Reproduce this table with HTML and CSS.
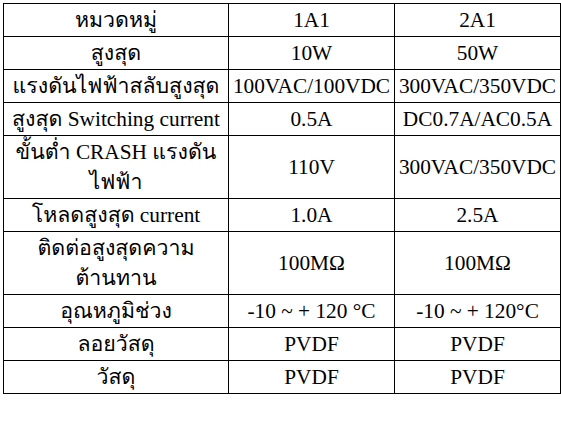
FILE: index.html
```html
<!DOCTYPE html>
<html lang="th">
<head>
<meta charset="utf-8">
<title>Spec table</title>
<link rel="stylesheet" href="styles.css">
</head>
<body>
<table class="spec">
  <colgroup>
    <col class="c1">
    <col class="c2">
    <col class="c3">
  </colgroup>
  <tbody>
    <tr><td>หมวดหมู่</td><td>1A1</td><td>2A1</td></tr>
    <tr><td>สูงสุด</td><td>10W</td><td>50W</td></tr>
    <tr><td>แรงดันไฟฟ้าสลับสูงสุด</td><td>100VAC/100VDC</td><td>300VAC/350VDC</td></tr>
    <tr><td>สูงสุด Switching current</td><td>0.5A</td><td>DC0.7A/AC0.5A</td></tr>
    <tr><td>ขั้นต่ำ CRASH แรงดัน<br>ไฟฟ้า</td><td>110V</td><td>300VAC/350VDC</td></tr>
    <tr><td>โหลดสูงสุด current</td><td>1.0A</td><td>2.5A</td></tr>
    <tr><td>ติดต่อสูงสุดความ<br>ต้านทาน</td><td>100MΩ</td><td>100MΩ</td></tr>
    <tr><td>อุณหภูมิช่วง</td><td>-10 ~ + 120 °C</td><td>-10 ~ + 120°C</td></tr>
    <tr><td>ลอยวัสดุ</td><td>PVDF</td><td>PVDF</td></tr>
    <tr><td>วัสดุ</td><td>PVDF</td><td>PVDF</td></tr>
  </tbody>
</table>
</body>
</html>
```
FILE: styles.css
```css
html, body {
  margin: 0;
  padding: 0;
  background: #fff;
}
body {
  padding: 3px 0 0 3px;
}
.spec {
  border-collapse: collapse;
  table-layout: fixed;
  width: 557px;
  font-family: "Liberation Serif", "Tahoma", "Loma", "Garuda", "Noto Sans Thai Looped", "Noto Serif Thai", "Noto Sans Thai", serif;
  font-size: 21.33px;
  color: #000;
}
.spec .c1 { width: 225px; }
.spec .c2 { width: 166px; }
.spec .c3 { width: 166px; }
.spec td {
  border: 1.5px solid #000;
  padding: 1px 0;
  line-height: 30px;
  text-align: center;
  vertical-align: middle;
  white-space: nowrap;
  overflow: hidden;
}
```
